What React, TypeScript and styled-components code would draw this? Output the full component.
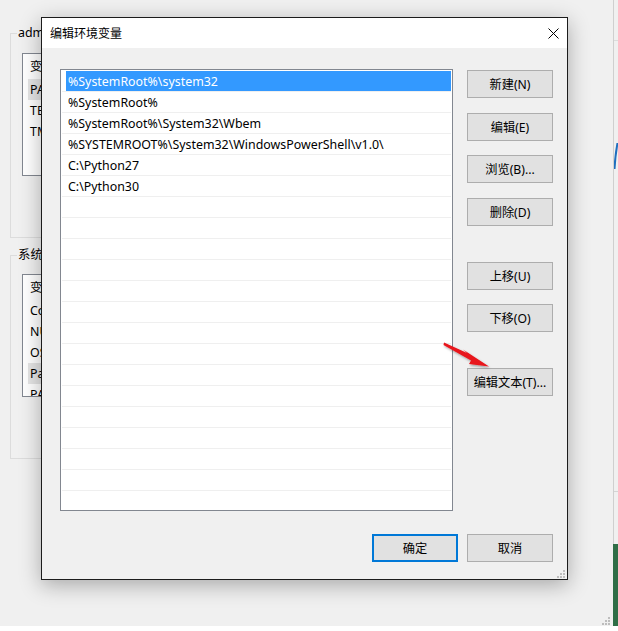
import React from "react";
import styled, { createGlobalStyle } from "styled-components";

const Global = createGlobalStyle`
  html, body { margin: 0; padding: 0; background: #ffffff; }
  body { font-family: "Noto Sans", "Noto Sans CJK SC", sans-serif; font-size: 12px; color: #000; }
  * { box-sizing: border-box; }
`;

const FONT = `"Noto Sans", "Noto Sans CJK SC", sans-serif`;

const Screen = styled.div`
  width: 618px;
  height: 631px;
  display: flex;
  flex-direction: column;
  overflow: hidden;
`;

const Desktop = styled.div`
  height: 626px;
  display: flex;
`;

const MainArea = styled.div`
  position: relative;
  width: 613px;
  background: #f0f0f0;
  overflow: hidden;
`;

const SideStrip = styled.div`
  flex: 1;
  display: flex;
  flex-direction: column;
  border-left: 1px solid #cfcfcf;
  background: #f0f0f0;
`;

const StripTop = styled.div`
  height: 41px;
  border-bottom: 1px solid #dcdcdc;
`;

const StripMark = styled.svg`
  display: block;
  margin-top: 102px;
  width: 4px;
  height: 26px;
`;

const StripMid = styled.div`
  height: 323px;
  border-bottom: 1px solid #d4d4d4;
`;

const StripGreen = styled.div`
  margin-top: 52px;
  flex: 1;
  background: #2f6e47;
  margin-left: -1px;
`;

const BottomStrip = styled.div`
  height: 5px;
  background: #ffffff;
`;

/* ---------- background window ---------- */

const BackWindow = styled.div`
  padding: 25px 0 0 10px;
  width: 540px;
  display: flex;
  flex-direction: column;
`;

const GroupBox = styled.fieldset<{ $top?: number; $padTop?: number }>`
  margin: ${(p) => p.$top ?? 0}px 0 0 0;
  border: 1px solid #dcdcdc;
  padding: ${(p) => p.$padTop ?? 12}px 10px 61px 11px;
  min-width: 0;
`;

const GroupTitle = styled.legend`
  font-family: ${FONT};
  font-size: 12.4px;
  line-height: 16px;
  padding: 0 1px;
  margin-left: -5px;
  color: #000;
`;

const ListView = styled.div`
  height: 123px;
  background: #fff;
  border: 1px solid #828790;
  overflow: hidden;
`;

const ListHeader = styled.div`
  height: 25px;
  line-height: 25px;
  padding-left: 7px;
  font-size: 12.4px;
`;

const ListRow = styled.div<{ $sel?: boolean }>`
  height: 21px;
  line-height: 21px;
  margin-left: 5px;
  padding-left: 2px;
  font-size: 12.4px;
  white-space: nowrap;
  background: ${(p) => (p.$sel ? "#e5e5e5" : "transparent")};
`;

/* ---------- dialog ---------- */

const Dialog = styled.div`
  position: absolute;
  left: 41px;
  top: 17px;
  width: 527px;
  height: 563px;
  border: 1px solid #1c1c1c;
  background: #f0f0f0;
  box-shadow: 0 5px 20px rgba(0, 0, 0, 0.3);
  display: flex;
  flex-direction: column;
`;

const TitleBar = styled.div`
  height: 30px;
  background: #ffffff;
  display: flex;
  align-items: center;
  padding-left: 8px;
`;

const TitleText = styled.div`
  flex: 1;
  font-family: ${FONT};
  font-size: 12px;
  color: #000;
`;

const CloseBox = styled.div`
  width: 28px;
  height: 30px;
  display: flex;
  align-items: center;
  justify-content: center;
`;

const Body = styled.div`
  flex: 1;
  display: flex;
  flex-direction: column;
  padding: 21px 14px 17px 18px;
`;

const TopRow = styled.div`
  display: flex;
  gap: 14px;
`;

const PathList = styled.div`
  width: 393px;
  height: 442px;
  background: #ffffff;
  border: 1px solid #828790;
  padding-top: 1px;
  overflow: hidden;
`;

const PathRow = styled.div`
  height: 21px;
  margin: 0 1px;
  border-bottom: 1px solid #efefef;
  display: flex;
`;

const PathCell = styled.div<{ $sel?: boolean }>`
  flex: 1;
  margin-left: 4px;
  padding-left: 2px;
  line-height: 21px;
  font-family: ${FONT};
  font-size: 12.4px;
  white-space: nowrap;
  background: ${(p) => (p.$sel ? "#3399ff" : "transparent")};
  color: ${(p) => (p.$sel ? "#ffffff" : "#000000")};
`;

const ButtonColumn = styled.div`
  width: 86px;
  display: flex;
  flex-direction: column;
`;

const WinButton = styled.button<{ $top?: number; $default?: boolean }>`
  margin: ${(p) => p.$top ?? 0}px 0 0 0;
  width: 86px;
  height: 28px;
  padding: 0;
  background: #e1e1e1;
  border: ${(p) => (p.$default ? "2px solid #0078d7" : "1px solid #adadad")};
  font-family: ${FONT};
  font-size: 12.2px;
  color: #000;
  white-space: nowrap;
`;

const BottomRow = styled.div`
  margin-top: 23px;
  display: flex;
  justify-content: flex-end;
  gap: 9px;
`;

const Grip = styled.svg<{ $right: number; $bottom: number }>`
  position: absolute;
  right: ${(p) => p.$right}px;
  bottom: ${(p) => p.$bottom}px;
  width: 8px;
  height: 8px;
`;

const ArrowSvg = styled.svg`
  position: absolute;
  left: 436px;
  top: 336px;
  width: 62px;
  height: 40px;
  overflow: visible;
`;

const GripIcon: React.FC<{ right: number; bottom: number }> = ({ right, bottom }) => (
  <Grip $right={right} $bottom={bottom} viewBox="0 0 8 8">
    {[
      [6, 0],
      [3, 3],
      [6, 3],
      [0, 6],
      [3, 6],
      [6, 6],
    ].map(([x, y], i) => (
      <rect key={i} x={x} y={y} width="2" height="2" fill="#bdbdbd" />
    ))}
  </Grip>
);

const paths = [
  "%SystemRoot%\\system32",
  "%SystemRoot%",
  "%SystemRoot%\\System32\\Wbem",
  "%SYSTEMROOT%\\System32\\WindowsPowerShell\\v1.0\\",
  "C:\\Python27",
  "C:\\Python30",
];

const rows = Array.from({ length: 20 }, (_, i) => paths[i] ?? "");

export default function App() {
  return (
    <>
      <Global />
      <Screen>
        <Desktop>
          <MainArea>
            <BackWindow>
              <GroupBox>
                <GroupTitle>admin 的用户变量(U)</GroupTitle>
                <ListView>
                  <ListHeader>变量</ListHeader>
                  <ListRow $sel>PATH</ListRow>
                  <ListRow>TEMP</ListRow>
                  <ListRow>TMP</ListRow>
                </ListView>
              </GroupBox>
              <GroupBox $top={9} $padTop={11}>
                <GroupTitle>系统变量(S)</GroupTitle>
                <ListView>
                  <ListHeader>变量</ListHeader>
                  <ListRow>ComSpec</ListRow>
                  <ListRow>NUMBER_OF_PROCESSORS</ListRow>
                  <ListRow>OS</ListRow>
                  <ListRow $sel>Path</ListRow>
                  <ListRow>PATHEXT</ListRow>
                </ListView>
              </GroupBox>
            </BackWindow>

            <Dialog>
              <TitleBar>
                <TitleText>编辑环境变量</TitleText>
                <CloseBox>
                  <svg width="11" height="11" viewBox="0 0 11 11">
                    <path d="M0.5 0.5 L10.5 10.5 M10.5 0.5 L0.5 10.5" stroke="#000" strokeWidth="1" fill="none" />
                  </svg>
                </CloseBox>
              </TitleBar>
              <Body>
                <TopRow>
                  <PathList>
                    {rows.map((t, i) => (
                      <PathRow key={i}>
                        <PathCell $sel={i === 0}>{t}</PathCell>
                      </PathRow>
                    ))}
                  </PathList>
                  <ButtonColumn>
                    <WinButton $top={1}>新建(N)</WinButton>
                    <WinButton $top={15}>编辑(E)</WinButton>
                    <WinButton $top={14}>浏览(B)...</WinButton>
                    <WinButton $top={15}>删除(D)</WinButton>
                    <WinButton $top={36}>上移(U)</WinButton>
                    <WinButton $top={14}>下移(O)</WinButton>
                    <WinButton $top={36}>编辑文本(T)...</WinButton>
                  </ButtonColumn>
                </TopRow>
                <BottomRow>
                  <WinButton $default>确定</WinButton>
                  <WinButton>取消</WinButton>
                </BottomRow>
              </Body>
              <GripIcon right={2} bottom={1} />
            </Dialog>

            <ArrowSvg viewBox="0 0 62 40">
              <defs>
                <filter id="arrowShadow" x="-30%" y="-30%" width="160%" height="160%">
                  <feDropShadow dx="1" dy="1.5" stdDeviation="1.2" floodColor="#000" floodOpacity="0.35" />
                </filter>
              </defs>
              <path
                d="M8 6.5 L31 17 L27 13.5 L53 30.5 L33 28 L35 24.5 L7.5 9 Z"
                fill="#e8141a"
                filter="url(#arrowShadow)"
              />
            </ArrowSvg>

            <GripIcon right={3} bottom={1} />
          </MainArea>
          <SideStrip>
            <StripTop />
            <StripMark viewBox="0 0 4 26">
              <path d="M3.5 0 C2 8 1 16 0.5 26" stroke="#1f6fbf" strokeWidth="2" fill="none" />
            </StripMark>
            <StripMid />
            <StripGreen />
          </SideStrip>
        </Desktop>
        <BottomStrip />
      </Screen>
    </>
  );
}
